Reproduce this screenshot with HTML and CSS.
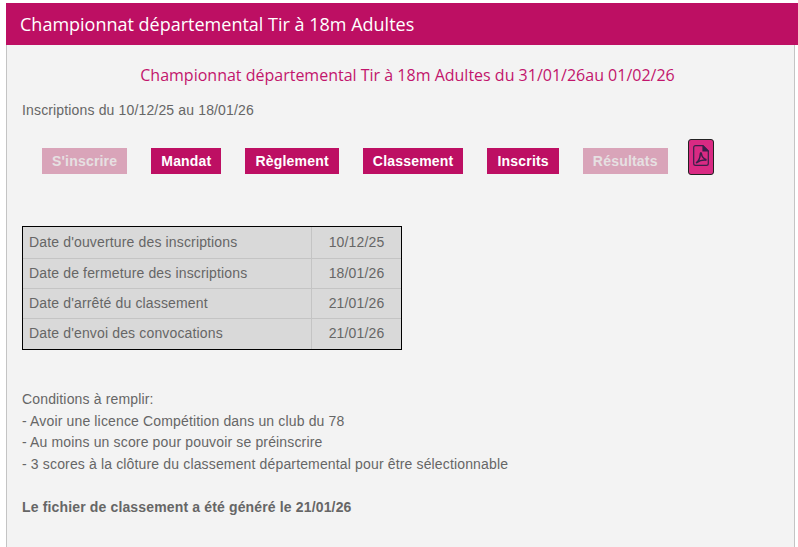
FILE: index.html
```html
<!DOCTYPE html>
<html lang="fr">
<head>
<meta charset="utf-8">
<title>Championnat départemental Tir à 18m Adultes</title>
<link rel="stylesheet" href="styles.css">
</head>
<body>
<header class="page-header">Championnat départemental Tir à 18m Adultes</header>
<main class="panel">
  <h2 class="event-title">Championnat départemental Tir à 18m Adultes du 31/01/26au 01/02/26</h2>
  <p class="dates">Inscriptions du 10/12/25 au 18/01/26</p>
  <nav class="actions">
    <a class="btn btn-off">S'inscrire</a>
    <a class="btn">Mandat</a>
    <a class="btn">Règlement</a>
    <a class="btn">Classement</a>
    <a class="btn">Inscrits</a>
    <a class="btn btn-off">Résultats</a>
    <a class="pdf" aria-label="PDF">
      <svg width="16" height="21" viewBox="0 0 16 21" fill="none" stroke="#3a1f4a" stroke-width="1.2">
        <path d="M2.600.7h7.400l5.300 5.300V18.400a1.900 1.900 0 0 1-1.900 1.900H2.600a1.900 1.900 0 0 1-1.900-1.900V2.600A1.900 1.900 0 0 1 2.600.7z"/>
        <path d="M10 .9v5.100h5.100z" fill="#3a1f4a"/>
        <path stroke-width="1.500" d="M3 18c2-1.200 4-4.200 4.400-9.500.1-1.100.9-1.100 1 0 .3 2.800 1.800 5.200 5.100 6.300M3.800 17.600c2.600-1.900 5.800-2.800 9.700-2.400"/>
      </svg>
    </a>
  </nav>
  <div class="info-box">
    <table class="info">
      <tr><td>Date d'ouverture des inscriptions</td><td class="val">10/12/25</td></tr>
      <tr><td>Date de fermeture des inscriptions</td><td class="val">18/01/26</td></tr>
      <tr><td>Date d'arrêté du classement</td><td class="val">21/01/26</td></tr>
      <tr><td>Date d'envoi des convocations</td><td class="val">21/01/26</td></tr>
    </table>
  </div>
  <p class="conditions">Conditions à remplir:<br>- Avoir une licence Compétition dans un club du 78<br>- Au moins un score pour pouvoir se préinscrire<br>- 3 scores à la clôture du classement départemental pour être sélectionnable</p>
  <p class="generated">Le fichier de classement a été généré le 21/01/26</p>
</main>
</body>
</html>
```
FILE: styles.css
```css
html, body { margin: 0; padding: 0; background: #fff; }
body {
  padding-top: 3px;
  padding-left: 6px;
  height: 544px;
  overflow: hidden;
  font-family: "Liberation Sans", Arial, sans-serif;
  font-size: 14px;
  letter-spacing: 0.15px;
  color: #666;
}
.page-header {
  height: 42px;
  line-height: 42px;
  padding-left: 14px;
  background: #bd0f63;
  color: #fff;
  font-family: "Open Sans", sans-serif;
  font-size: 18px;
  letter-spacing: 0;
}
.panel {
  width: 787px;
  height: 502px;
  background: #f3f3f3;
  border-left: 1px solid #c4c4c4;
  border-right: 1px solid #c4c4c4;
  display: flow-root;
}
.event-title {
  margin: 19px 0 0;
  padding-left: 14px;
  text-align: center;
  font-family: "Open Sans", sans-serif;
  font-weight: 400;
  font-size: 16px;
  line-height: 22px;
  letter-spacing: 0;
  color: #c2156c;
}
.dates { margin: 14px 0 0 15px; line-height: 20px; }
.actions {
  display: flex;
  align-items: flex-start;
  gap: 24px;
  margin: 19px 0 0 35px;
  height: 36px;
}
.btn {
  margin-top: 9px;
  height: 26px;
  line-height: 26px;
  padding: 0 10px;
  background: #bd0f63;
  color: #fff;
  font-weight: 700;
  letter-spacing: 0.2px;
}
.btn-off { background: #d9a4b9; color: #e6e0e2; }
.pdf {
  margin-left: -4px;
  width: 24px;
  height: 31px;
  padding-bottom: 3px;
  border: 1px solid #222;
  border-radius: 3px;
  background: #d92a83;
  display: flex;
  align-items: center;
  justify-content: center;
}
.info-box {
  margin: 51px 0 0 15px;
  width: 378px;
  border: 1px solid #000;
  background: #d9d9d9;
}
.info {
  width: 100%;
  border-collapse: collapse;
  border-style: hidden;
}
.info td {
  height: 27px;
  padding: 0 6px 2px;
  border: 1px solid #c4c4c4;
}
.info tr:first-child td { height: 29px; }
.info tr:last-child td { height: 28px; }
.info .val { width: 77px; text-align: center; }
.conditions { margin: 39px 0 0 15px; line-height: 21.5px; }
.generated { margin: 22px 0 0 15px; line-height: 21px; font-weight: 700; }
```
